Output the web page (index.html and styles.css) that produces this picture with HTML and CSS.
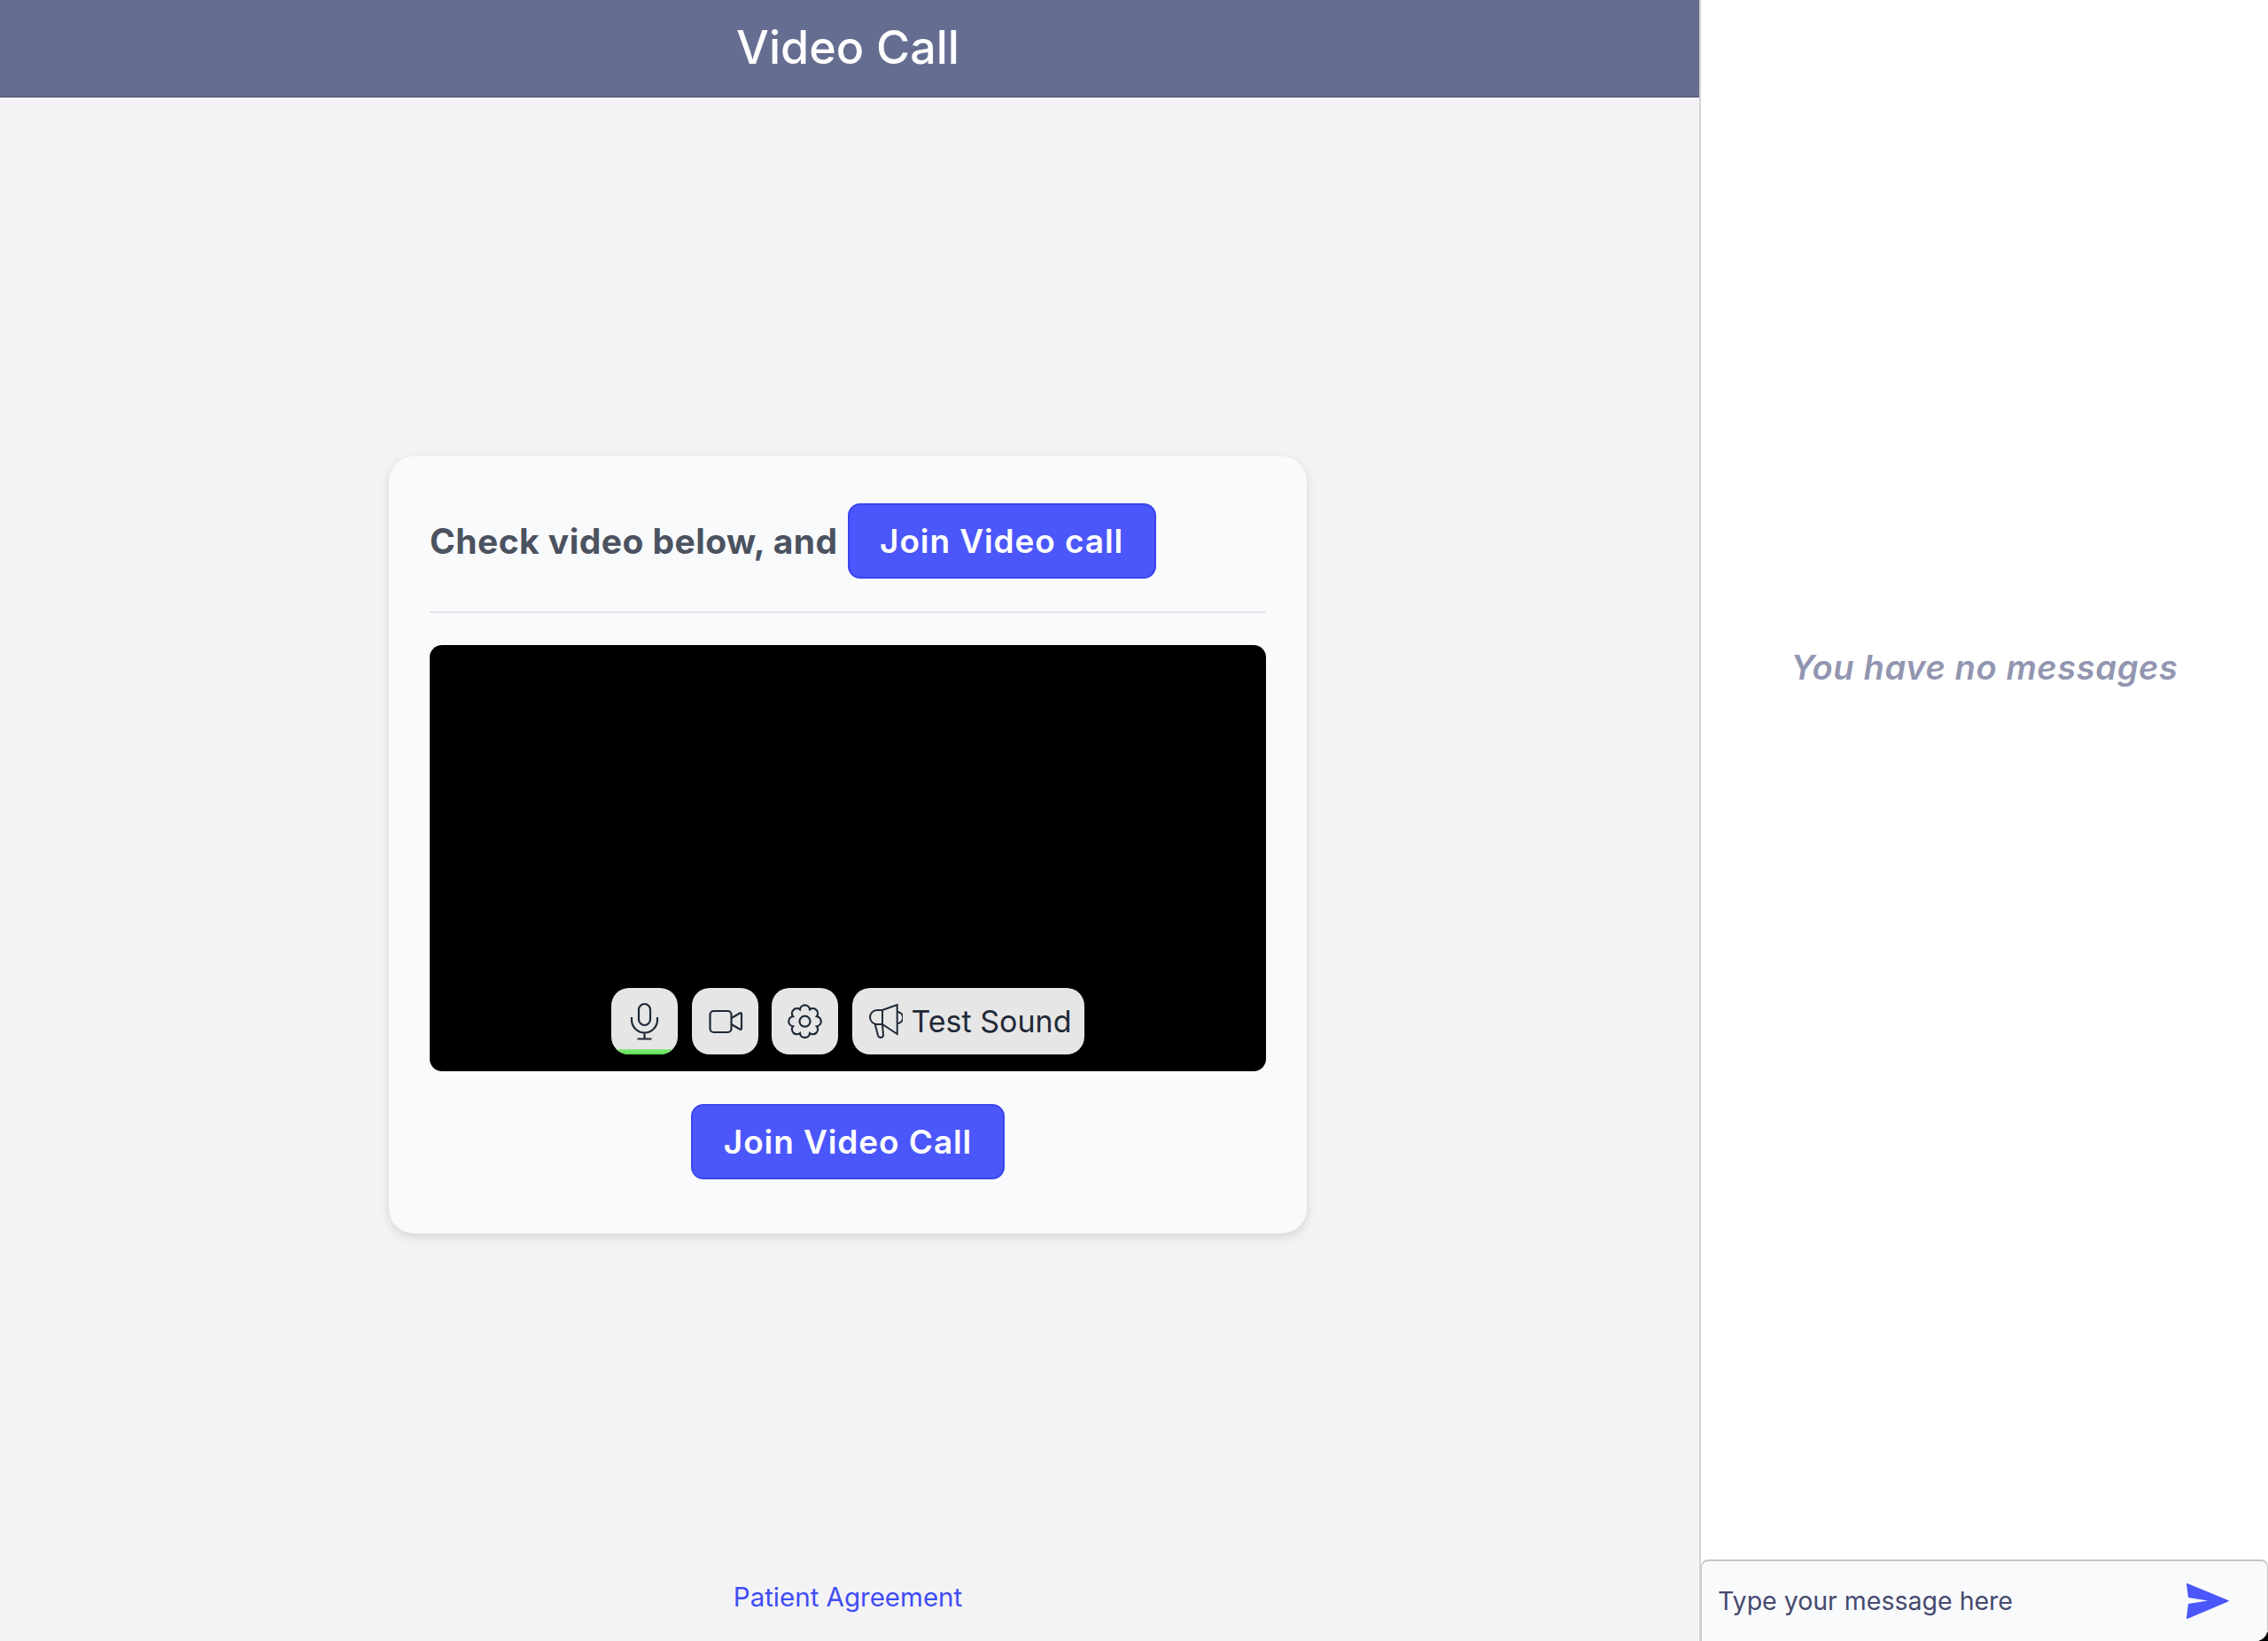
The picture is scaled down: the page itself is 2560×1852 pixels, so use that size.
FILE: index.html
```html
<!DOCTYPE html>
<html lang="en">
<head>
<meta charset="utf-8">
<title>Video Call</title>
<link rel="stylesheet" href="styles.css">
</head>
<body>
<div class="app">
  <main class="main">
    <header class="topbar">Video Call</header>
    <section class="stage">
      <div class="card">
        <div class="card-head">
          <h2 class="card-title">Check video below, and</h2>
          <button class="btn btn-head">Join Video call</button>
        </div>
        <div class="video">
          <div class="controls">
            <button class="ctl ctl-mic">
              <svg class="icon" viewBox="0 0 75 75"><rect x="31" y="18" width="13" height="24" rx="6.500"/><path d="M23 33v3a14.500 14.500 0 0 0 29 0v-3M37.500 50.500v7M29.500 57.500h16"/></svg>
              <span class="level"></span>
            </button>
            <button class="ctl">
              <svg class="icon" viewBox="0 0 75 75"><rect x="20.500" y="26" width="24" height="24" rx="4"/><path d="M44.500 34l9.500-5.500q2-1 2 1.200v15.600q0 2.200-2 1.200L44.500 41"/></svg>
            </button>
            <button class="ctl">
              <svg class="icon" viewBox="0 0 75 75"><g transform="translate(37.500 37.700)"><path d="M-5.550-13.400A5.600 5.600 0 0 1 5.550-13.400A5.600 5.600 0 0 1 13.400-5.550A5.600 5.600 0 0 1 13.400 5.550A5.600 5.600 0 0 1 5.550 13.400A5.600 5.600 0 0 1-5.550 13.400A5.600 5.600 0 0 1-13.400 5.550A5.600 5.600 0 0 1-13.400-5.550A5.600 5.600 0 0 1-5.550-13.400Z"/><circle r="6"/></g></svg>
            </button>
            <button class="ctl ctl-sound">
              <svg class="icon-mega" viewBox="20 18 38 39"><path d="M51.700 19V52L35 41H29a8 8 0 0 1-8-8a8 8 0 0 1 8-8H35L51.700 19ZM35 25V41M26.700 41l3.300 12.500q.8 2.500 3 2.500t3-2.500L35 41M51.700 27a6.500 6.500 0 0 1 0 13"/></svg>
              <span>Test Sound</span>
            </button>
          </div>
        </div>
        <div class="card-foot">
          <button class="btn btn-foot">Join Video Call</button>
        </div>
      </div>
    </section>
    <footer class="foot"><a class="agree" href="#">Patient Agreement</a></footer>
  </main>
  <aside class="chat">
    <div class="messages"><p class="empty">You have no messages</p></div>
    <div class="composer-wrap">
      <div class="composer">
        <span class="placeholder">Type your message here</span>
        <svg class="send" viewBox="0 0 48 42"><path d="M1 1c-.5-.3-1 0-1 .8L2 17l22 3.500L2 24 0 40c0 1 .5 1.300 1 1l46-19.500c1-.5 1-1 0-1.500z"/></svg>
      </div>
    </div>
  </aside>
</div>
</body>
</html>
```
FILE: styles.css
```css
* { box-sizing: border-box; }
html, body { margin: 0; height: 100%; }
body { font-family: Inter, "Liberation Sans", sans-serif; background: #fff; }
.app { display: flex; height: 1852px; width: 2560px; overflow: hidden; }
.main { width: 1920px; display: flex; flex-direction: column; background: #f3f3f5; border-right: 2px solid #d4d4d6; }
.topbar { height: 110px; flex: none; background: #656d91; border-bottom: 1px solid #4a4f68; color: #fff; font-size: 52px; font-weight: 500; display: flex; align-items: center; justify-content: center; padding: 0 4px 2px 0; }
.stage { flex: 1; display: flex; align-items: center; justify-content: center; padding: 45px 4px 0 0; }
.card { width: 1036px; height: 877px; background: #f9fafc; border-radius: 28px; padding: 53px 46px 0; box-shadow: 0 4px 12px rgba(0,0,0,.12); }
.card-head { display: flex; align-items: center; gap: 11px; height: 124px; padding-bottom: 36px; border-bottom: 2px solid #e3e4e8; }
.card-title { margin: 0; font-size: 39px; font-weight: 700; color: #4b5260; letter-spacing: .45px; white-space: nowrap; }
.btn { font-family: Inter, sans-serif; height: 85px; color: #fff; background: #4b57fa; border: 2px solid #3a45ee; border-radius: 14px; font-size: 37px; font-weight: 600; letter-spacing: .9px; display: block; padding: 0; }
.btn-head { width: 348px; }
.btn-foot { width: 354px; }
.video { position: relative; height: 481px; background: #000; border-radius: 14px; margin-top: 36px; }
.controls { position: absolute; left: 205px; bottom: 19px; display: flex; gap: 15.500px; }
.ctl { position: relative; width: 75px; height: 75px; border: 0; padding: 0; border-radius: 20px; background: #e6e6e6; overflow: hidden; display: block; }
.icon { display: block; width: 75px; height: 75px; fill: none; stroke: #1f2937; stroke-width: 2.200; }
.level { position: absolute; left: 0; right: 0; bottom: 0; height: 6px; background: linear-gradient(#8ce884, #56e04a); }
.ctl-sound { width: 262px; display: flex; align-items: center; gap: 10px; padding-left: 19px; color: #1f2937; font-family: Inter, sans-serif; font-size: 34px; white-space: nowrap; }
.icon-mega { width: 38px; height: 39px; fill: none; stroke: #1f2937; stroke-width: 2; flex: none; }
.card-foot { display: flex; justify-content: center; margin-top: 37px; }
.foot { height: 101px; flex: none; display: flex; align-items: center; justify-content: center; padding-right: 4px; }
.agree { color: #3f4cf5; font-size: 29.500px; text-decoration: none; }
.chat { width: 640px; display: flex; flex-direction: column; background: #fff; }
.messages { flex: 1; display: flex; align-items: center; justify-content: center; padding-bottom: 254px; }
.empty { margin: 0; font-size: 38px; font-weight: 600; font-style: italic; color: #9296b0; letter-spacing: .650px; }
.composer-wrap { background: linear-gradient(to top left, #000 0 50%, transparent 50%) no-repeat right bottom / 10px 10px; }
.composer { height: 92px; background: #f9fafc; border-top: 2px solid #c4c4c4; border-left: 1px solid #c4c4c4; border-right: 1px solid #c4c4c4; border-top-left-radius: 8px; border-top-right-radius: 8px; border-bottom-right-radius: 14px; display: flex; align-items: center; justify-content: space-between; padding: 0 43px 0 18px; }
.placeholder { font-size: 28.500px; color: #454a6e; padding-bottom: 2px; }
.send { width: 48px; height: 42px; fill: #4b57fa; }
```
